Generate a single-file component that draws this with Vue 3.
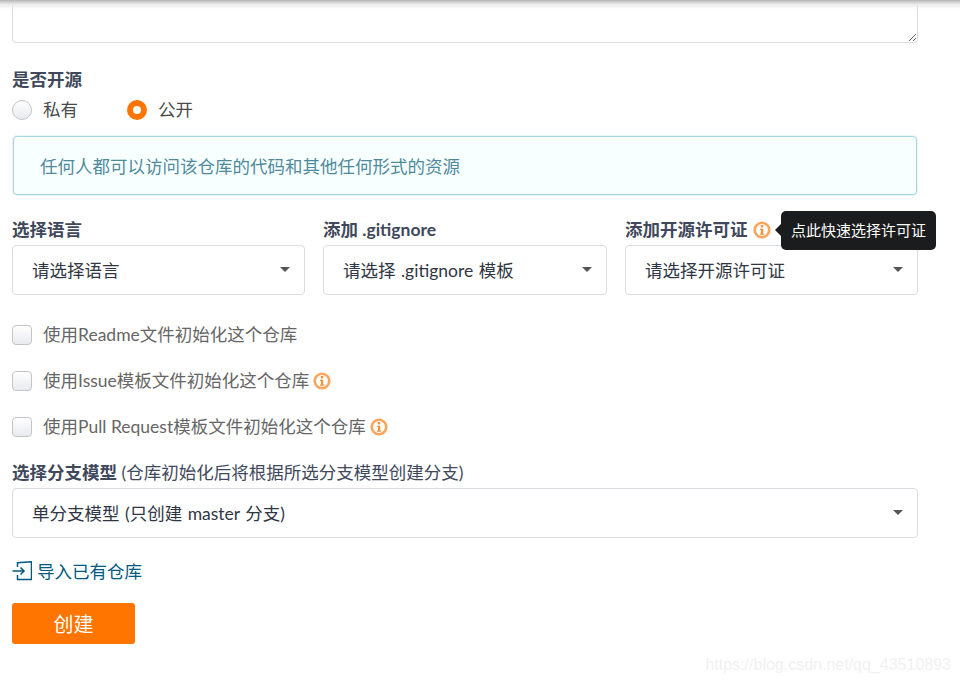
<script setup>
const licenseTip = '点此快速选择许可证'

const selects = [
  { label: '选择语言', text: '请选择语言', size: 'wide' },
  { label: '添加 .gitignore', text: '请选择 .gitignore 模板', size: 'narrow' },
  { label: '添加开源许可证', text: '请选择开源许可证', size: 'wide', info: true }
]

const checks = [
  { text: '使用Readme文件初始化这个仓库' },
  { text: '使用Issue模板文件初始化这个仓库', info: true },
  { text: '使用Pull Request模板文件初始化这个仓库', info: true }
]
</script>

<template>
  <div class="page">
    <div class="top-shadow"></div>
    <textarea class="desc"></textarea>

    <div class="field-label open-label">是否开源</div>
    <div class="radios">
      <div class="radio-item">
        <span class="radio"></span>
        <span>私有</span>
      </div>
      <div class="radio-item">
        <span class="radio on"></span>
        <span>公开</span>
      </div>
    </div>

    <div class="notice">任何人都可以访问该仓库的代码和其他任何形式的资源</div>

    <div class="select-row">
      <div v-for="s in selects" :key="s.label" class="select-col" :class="s.size">
        <div class="field-label col-label">
          {{ s.label }}
          <svg v-if="s.info" class="info" viewBox="0 0 18 18">
            <circle cx="9" cy="9" r="7.3" />
            <rect x="7.8" y="4" width="2.4" height="2.4" />
            <path d="M7 7.7h3.2v4.7h1v1.3H7v-1.3h1V9H7z" />
          </svg>
        </div>
        <div class="select">
          <span>{{ s.text }}</span>
          <i class="caret"></i>
        </div>
      </div>
    </div>

    <div class="checks">
      <div v-for="c in checks" :key="c.text" class="check-item">
        <span class="checkbox"></span>
        <span>{{ c.text }}</span>
        <svg v-if="c.info" class="info" viewBox="0 0 18 18">
          <circle cx="9" cy="9" r="7.3" />
          <rect x="7.8" y="4" width="2.4" height="2.4" />
          <path d="M7 7.7h3.2v4.7h1v1.3H7v-1.3h1V9H7z" />
        </svg>
      </div>
    </div>

    <div class="branch-label">
      <b class="field-label">选择分支模型</b> (仓库初始化后将根据所选分支模型创建分支)
    </div>
    <div class="select">
      <span>单分支模型 (只创建 master 分支)</span>
      <i class="caret"></i>
    </div>

    <a class="import-link">
      <svg viewBox="0 0 20 20" class="import-icon">
        <path d="M5.5 6V1.8L19.5 0.8V18.5H5.5V14" />
        <path d="M0.5 10H12M8.5 6.5L12 10l-3.5 3.5" />
      </svg>
      <span class="import-text">导入已有仓库</span>
    </a>

    <button class="create">创建</button>

    <div class="tooltip">{{ licenseTip }}</div>
    <div class="watermark">https://blog.csdn.net/qq_43510893</div>
  </div>
</template>

<style scoped>
.page {
  position: relative;
  width: 960px;
  height: 683px;
  box-sizing: border-box;
  padding: 0 42px 0 12px;
  overflow: hidden;
  background: #fff;
  font-family: Lato, "Noto Sans CJK SC", sans-serif;
  font-size: 17.5px;
  color: #40485b;
}

.top-shadow {
  position: absolute;
  top: 0;
  left: 0;
  right: 0;
  height: 9px;
  background: linear-gradient(#b4b4b4, #e8e8e8 4px, rgba(255, 255, 255, 0));
  z-index: 2;
}

.desc {
  display: block;
  box-sizing: border-box;
  width: 906px;
  height: 43px;
  border: 1px solid #dcdde3;
  border-top: 0;
  border-radius: 0 0 4px 4px;
  resize: vertical;
  outline: none;
}

.field-label {
  font-weight: 700;
  color: #40485b;
  line-height: 22px;
}

.open-label {
  margin-top: 26px;
}

.radios {
  display: flex;
  gap: 49px;
  margin-top: 8px;
  height: 22px;
}

.radio-item {
  display: flex;
  align-items: center;
  gap: 11px;
  color: #4a4a4a;
  line-height: 22px;
}

.radio {
  box-sizing: border-box;
  width: 20px;
  height: 20px;
  border: 1px solid #c4c5ca;
  border-radius: 50%;
  background: linear-gradient(#fff, #e9eaee);
}

.radio.on {
  border: 6px solid #ff7500;
  background: #fff;
}

.notice {
  box-sizing: border-box;
  height: 59px;
  margin: 15px 1px 0;
  padding-left: 26px;
  line-height: 60px;
  background: #f8ffff;
  border: 1px solid #a9d5de;
  border-radius: 4px;
  box-shadow: 0 0 0 1px rgba(169, 213, 222, 0.25);
  color: #4f8a9c;
}

.select-row {
  display: flex;
  gap: 18px;
  margin-top: 24px;
}

.select-col.wide {
  width: 293px;
}

.select-col.narrow {
  width: 284px;
}

.col-label {
  display: flex;
  align-items: center;
  gap: 5px;
  height: 22px;
  margin-bottom: 4px;
}

.select {
  position: relative;
  box-sizing: border-box;
  height: 50px;
  padding: 0 40px 0 19px;
  border: 1px solid #dcdde3;
  border-radius: 4px;
  line-height: 50px;
  word-spacing: 1px;
  color: #303643;
  background: #fff;
}

.caret {
  position: absolute;
  right: 14px;
  top: 21px;
  width: 0;
  height: 0;
  border-left: 5px solid transparent;
  border-right: 5px solid transparent;
  border-top: 5px solid #555;
}

.info {
  flex: none;
  width: 18px;
  height: 18px;
}

.info circle {
  fill: none;
  stroke: #ffa55c;
  stroke-width: 2.6;
}

.info rect,
.info path {
  fill: #ff8f35;
}

.checks {
  display: flex;
  flex-direction: column;
  gap: 24px;
  margin-top: 29px;
}

.check-item {
  display: flex;
  align-items: center;
  height: 22px;
  color: #666;
  line-height: 22px;
}

.check-item .info {
  margin-left: 4px;
}

.checkbox {
  box-sizing: border-box;
  width: 20px;
  height: 20px;
  margin-right: 11px;
  border: 1px solid #c4c5ca;
  border-radius: 4px;
  background: linear-gradient(#fff, #e9eaee);
}

.branch-label {
  margin-top: 24px;
  margin-bottom: 4px;
  line-height: 22px;
  color: #40485b;
}

.import-link {
  display: flex;
  align-items: center;
  gap: 5px;
  height: 22px;
  margin-top: 22px;
  color: #005980;
  line-height: 22px;
}

.import-text {
  padding-top: 2px;
}

.import-icon {
  width: 20px;
  height: 20px;
  fill: none;
  stroke: #005980;
  stroke-width: 1.5;
}

.create {
  display: block;
  width: 123px;
  height: 41px;
  margin-top: 21px;
  padding: 0;
  border: 0;
  border-radius: 3px;
  background: #ff7500;
  color: #fff;
  font-family: inherit;
  font-size: 20px;
}

.tooltip {
  position: absolute;
  left: 781px;
  top: 211px;
  width: 155px;
  height: 39px;
  border-radius: 5px;
  background: #1b1c1d;
  color: #fff;
  font-size: 15px;
  line-height: 39px;
  text-align: center;
}

.tooltip::before {
  content: '';
  position: absolute;
  left: -6px;
  top: 13px;
  border-top: 6px solid transparent;
  border-bottom: 6px solid transparent;
  border-right: 6px solid #1b1c1d;
}

.watermark {
  position: absolute;
  right: 9px;
  top: 655px;
  font-family: "Liberation Sans", sans-serif;
  font-size: 16px;
  line-height: 20px;
  color: #f1f1f1;
}
</style>
